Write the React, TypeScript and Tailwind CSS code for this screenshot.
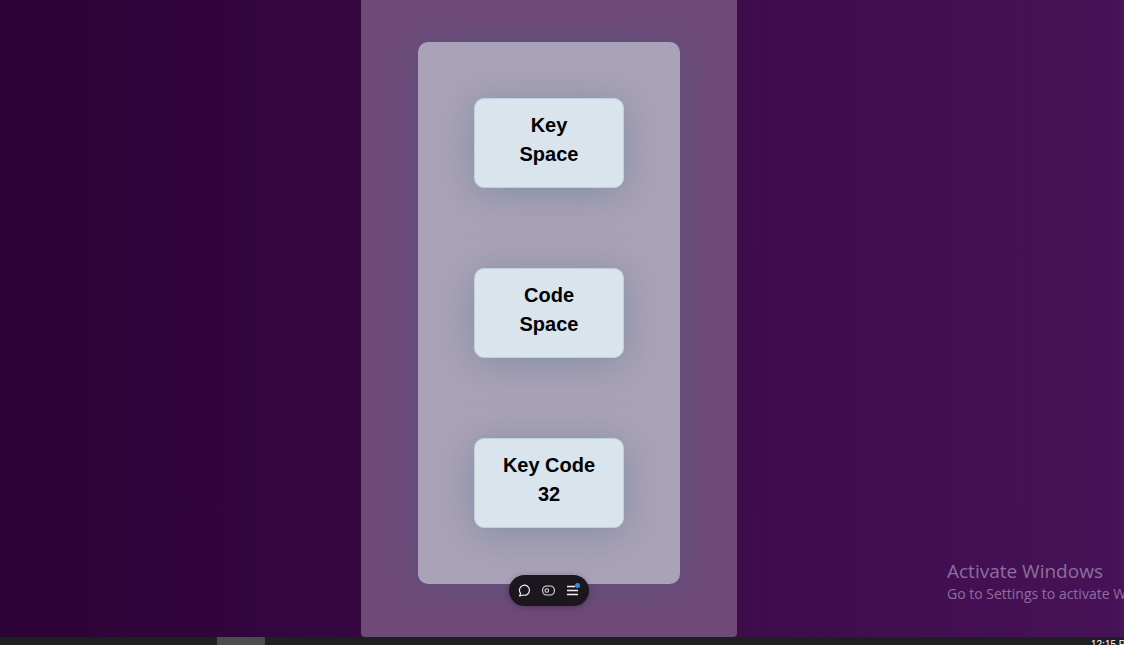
const Card = ({ title, value }: { title: string; value: string }) => {
  return (
    <div className="w-[150px] h-[90px] flex flex-col items-center justify-center pb-[6px] rounded-[10px] border border-[#bfd0dc] bg-[#d9e4ec] text-[20px] leading-[29px] font-bold text-black shadow-[0_5px_38px_rgba(95,125,145,0.55)]">
      <div>{title}</div>
      <div>{value}</div>
    </div>
  );
};

const Toolbar = () => {
  return (
    <div className="absolute left-[509px] top-[575px] w-[80px] h-[31px] flex items-center justify-center gap-[11px] rounded-full bg-[#1c171e] shadow-[0_1px_6px_rgba(0,0,0,0.25)]">
      <svg className="ml-[-1px]" width="13" height="13" viewBox="0 0 13 13" fill="none" stroke="#f0f0f0" strokeWidth="1.2">
        <path d="M1.6 12l1-2.6A5 5 0 1 1 5 11z" strokeLinejoin="round" />
      </svg>
      <svg width="13" height="11" viewBox="0 0 13 11" fill="none" stroke="#dedede" strokeWidth="1.1">
        <rect x="0.6" y="1" width="11.8" height="9" rx="4.2" />
        <circle cx="4.8" cy="5.5" r="1.8" />
      </svg>
      <div className="relative">
        <svg className="block" width="13" height="13" viewBox="0 0 13 13" fill="none" stroke="#f1f1f1" strokeWidth="1.3">
          <path d="M1 2.5h8M1 6.5h11M1 10.5h11" />
        </svg>
        <div className="absolute right-[-1px] top-[-1px] w-[5px] h-[5px] rounded-full bg-[#2f8fe0]" />
      </div>
    </div>
  );
};

const App = () => {
  return (
    <div className="relative h-[645px] w-[1124px] overflow-hidden font-['Liberation_Sans',sans-serif]">
      <div className="h-[637px] pl-[361px] bg-gradient-to-r from-[#2c0336] to-[#471257]">
        <div className="w-[376px] h-full flex justify-center pt-[42px] rounded-b-[4px] bg-[#6f4a78]">
          <div className="w-[262px] h-[542px] flex flex-col items-center gap-[80px] py-[56px] rounded-[10px] bg-[#aaa2b8] shadow-[0_0_36px_rgba(70,90,130,0.5)]">
            <Card title="Key" value="Space" />
            <Card title="Code" value="Space" />
            <Card title="Key Code" value="32" />
          </div>
        </div>
      </div>

      <div className="h-[8px] flex bg-[#1d2022]">
        <div className="w-[217px]" />
        <div className="w-[48px] bg-[#4a4d4f]" />
      </div>

      <Toolbar />

      <div className="absolute left-[947px] top-[560px] whitespace-nowrap font-['Open_Sans',sans-serif] text-[#8f6e9e]">
        <div className="text-[19px] leading-[23px]">Activate Windows</div>
        <div className="text-[14px] leading-[22px]">Go to Settings to activate Windows.</div>
      </div>

      <div className="absolute left-[1091px] top-[640px] whitespace-nowrap text-[10px] leading-[10px] text-white">12:15 PM</div>
    </div>
  );
};

export default App;
